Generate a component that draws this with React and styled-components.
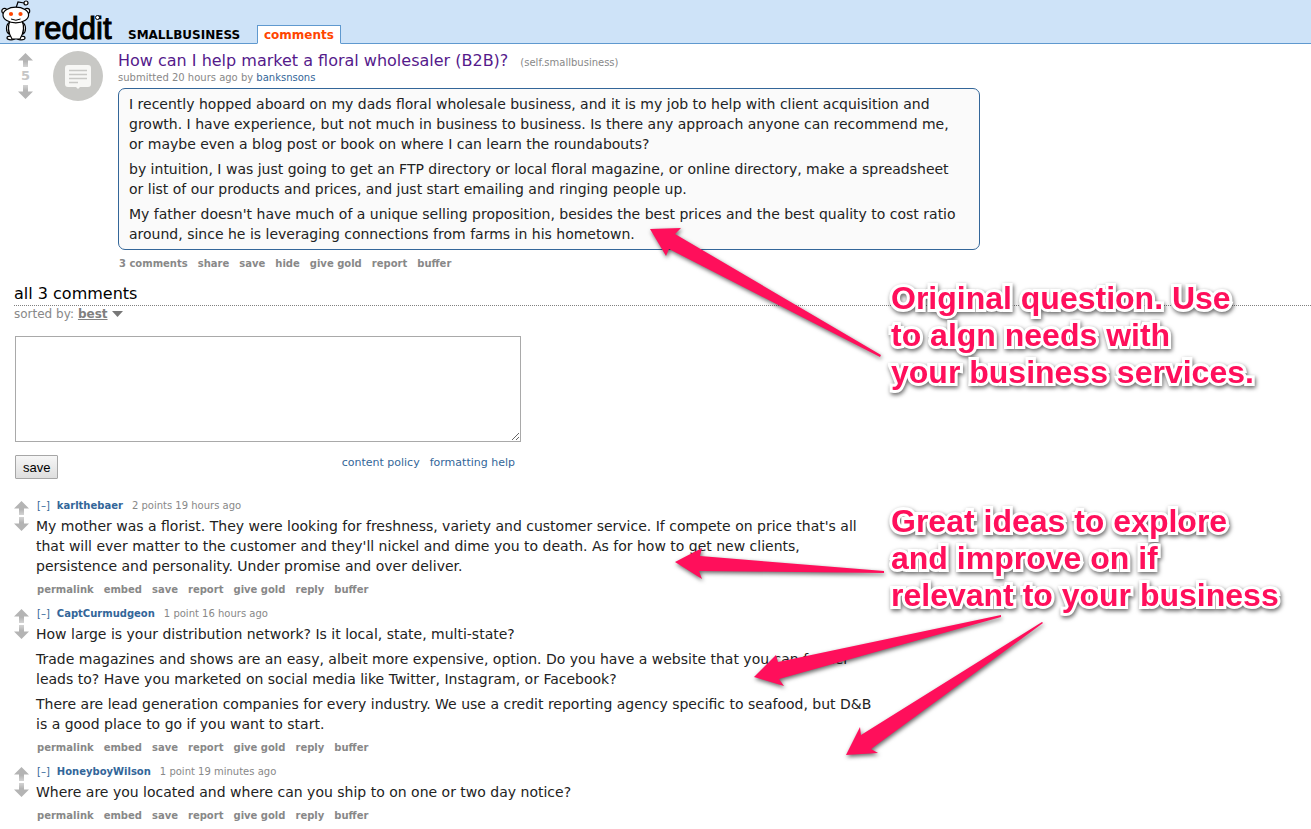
import styled, { createGlobalStyle } from 'styled-components';

const comments = [
    {
        author: 'karlthebaer',
        points: '2 points',
        time: '19 hours ago',
        body: [
            "My mother was a florist. They were looking for freshness, variety and customer service. If compete on price that's all that will ever matter to the customer and they'll nickel and dime you to death. As for how to get new clients, persistence and personality. Under promise and over deliver.",
        ],
    },
    {
        author: 'CaptCurmudgeon',
        points: '1 point',
        time: '16 hours ago',
        body: [
            'How large is your distribution network? Is it local, state, multi-state?',
            'Trade magazines and shows are an easy, albeit more expensive, option. Do you have a website that you can funnel leads to? Have you marketed on social media like Twitter, Instagram, or Facebook?',
            'There are lead generation companies for every industry. We use a credit reporting agency specific to seafood, but D&B is a good place to go if you want to start.',
        ],
    },
    {
        author: 'HoneyboyWilson',
        points: '1 point',
        time: '19 minutes ago',
        body: ['Where are you located and where can you ship to on one or two day notice?'],
    },
];

const postActions = ['3 comments', 'share', 'save', 'hide', 'give gold', 'report', 'buffer'];
const commentActions = ['permalink', 'embed', 'save', 'report', 'give gold', 'reply', 'buffer'];

function Snoo() {
    return (
        <svg width="32" height="43" viewBox="0 0 32 43" aria-hidden="true">
            <g fill="#fff" stroke="#000" strokeWidth="1.2">
                <path d="M16 8 L18 2 L24 3" fill="none" />
                <circle cx="26" cy="3" r="2" />
                <circle cx="4.5" cy="11" r="2.7" />
                <circle cx="27" cy="11" r="2.7" />
                <ellipse cx="11" cy="38" rx="4" ry="1.8" />
                <ellipse cx="21" cy="38" rx="4" ry="1.8" />
                <path d="M10 22 C5 25 6 32 9 34 Z M22 22 C27 25 26 32 23 34 Z" />
                <path d="M10 21 C7 27 9 34 12 39 H20 C23 34 25 27 22 21 Z" />
                <ellipse cx="15.8" cy="15" rx="12.8" ry="7.8" />
            </g>
            <circle cx="11" cy="14" r="2.1" fill="#ff4500" />
            <circle cx="20.5" cy="14" r="2.1" fill="#ff4500" />
            <path d="M11 19 Q16 21.500 20.500 19" fill="none" stroke="#000" />
        </svg>
    );
}

function VoteArrow({ down, label }) {
    return (
        <VoteButton type="button" aria-label={label}>
            <svg width="15" height="14" viewBox="0 0 15 14">
                <defs>
                    <linearGradient id="arrowFade" x1="0" y1="0" x2="0" y2="1">
                        <stop offset="0.6" stopColor="#b4b4b4" />
                        <stop offset="1" stopColor="#d4d4d4" />
                    </linearGradient>
                </defs>
                <path
                    d="M7.500 0 L15 7.500 H10 V14 H5 V7.500 H0 Z"
                    fill="url(#arrowFade)"
                    transform={down ? 'rotate(180 7.500 7)' : undefined}
                />
            </svg>
        </VoteButton>
    );
}

function Actions({ items }) {
    return (
        <ActionList>
            {items.map((item) => (
                <li key={item}>
                    <ActionLink href="#">{item}</ActionLink>
                </li>
            ))}
        </ActionList>
    );
}

function Comment({ author, points, time, body }) {
    return (
        <CommentRow>
            <CommentVotes>
                <VoteArrow label="upvote" />
                <VoteArrow down label="downvote" />
            </CommentVotes>
            <div>
                <CommentTagline>
                    <Link href="#">[–]</Link>
                    <Author href="#">{author}</Author>
                    <span>{points} {time}</span>
                </CommentTagline>
                <Markdown>
                    {body.map((text) => <p key={text}>{text}</p>)}
                </Markdown>
                <Actions items={commentActions} />
            </div>
        </CommentRow>
    );
}

export default function App() {
    return (
        <Page>
            <GlobalStyle />
            <Header>
                <Logo href="#">
                    <Snoo />
                    <Wordmark>reddit</Wordmark>
                </Logo>
                <PageName href="#">SMALLBUSINESS</PageName>
                <Tab href="#">comments</Tab>
            </Header>

            <Post>
                <PostVotes>
                    <VoteArrow label="upvote" />
                    <Score>5</Score>
                    <VoteArrow down label="downvote" />
                </PostVotes>
                <Thumbnail href="#" aria-label="self post">
                    <svg width="50" height="50" viewBox="0 0 50 50">
                        <circle cx="25" cy="25" r="25" fill="#c8c8c5" />
                        <path d="M15 14 H35 Q38 14 38 17 V33 Q38 36 35 36 H27 L25 38 L23 36 H15 Q12 36 12 33 V17 Q12 14 15 14 Z" fill="#f7f7f5" />
                        <path d="M16 19.500 H34 M16 23.500 H34 M16 27.500 H34 M16 31.500 H25" stroke="#c8c8c5" strokeWidth="1.5" />
                    </svg>
                </Thumbnail>
                <Entry>
                    <TitleLine>
                        <Title href="#">How can I help market a floral wholesaler (B2B)?</Title>
                        <Domain>(<a href="#">self.smallbusiness</a>)</Domain>
                    </TitleLine>
                    <Tagline>submitted 20 hours ago by <Link href="#">banksnsons</Link></Tagline>
                    <PostBody>
                        <p>I recently hopped aboard on my dads floral wholesale business, and it is my job to help with client acquisition and growth. I have experience, but not much in business to business. Is there any approach anyone can recommend me, or maybe even a blog post or book on where I can learn the roundabouts?</p>
                        <p>by intuition, I was just going to get an FTP directory or local floral magazine, or online directory, make a spreadsheet or list of our products and prices, and just start emailing and ringing people up.</p>
                        <p>My father doesn't have much of a unique selling proposition, besides the best prices and the best quality to cost ratio around, since he is leveraging connections from farms in his hometown.</p>
                    </PostBody>
                    <Actions items={postActions} />
                </Entry>
            </Post>

            <CommentArea>
                <PanelTitle>all 3 comments</PanelTitle>
                <SortRow>
                    sorted by:
                    <SortButton type="button">
                        <u>best</u>
                        <svg width="11" height="6" viewBox="0 0 11 6"><path d="M0 0 H11 L5.500 6 Z" fill="#777" /></svg>
                    </SortButton>
                </SortRow>
                <Form>
                    <TextBox aria-label="comment" />
                    <FormFooter>
                        <SaveButton type="button">save</SaveButton>
                        <HelpLinks>
                            <Link href="#">content policy</Link>
                            <Link href="#">formatting help</Link>
                        </HelpLinks>
                    </FormFooter>
                </Form>
                <Listing>
                    {comments.map((comment) => <Comment key={comment.author} {...comment} />)}
                </Listing>
            </CommentArea>

            <Arrows width="1311" height="829" viewBox="0 0 1311 829" aria-hidden="true">
                <path d="M650 229 L681 228 L675 234 L881 355 L880 357 L669 249 L666 256 Z" />
                <path d="M675 562 L702 548 L700 556 L884 571 V573 L699 571 L702 579 Z" />
                <path d="M754 677 L776 655 L778 662 L1001 615 V617 L779 679 L784 686 Z" />
                <path d="M846 755 L860 727 L861 735 L1042 622 L1043 623 L871 749 L878 753 Z" />
            </Arrows>
            <Note $top={280}>
                Original question. Use<br />to algn needs with<br />your business services.
            </Note>
            <Note $top={503}>
                Great ideas to explore<br />and improve on if<br />relevant to your business
            </Note>
        </Page>
    );
}

const GlobalStyle = createGlobalStyle`
    body {
        margin: 0;
        background-color: #fff;
        font-family: Verdana, "DejaVu Sans", sans-serif;
        font-size: 10px;
        color: #888;
    }
    a {
        color: inherit;
        text-decoration: none;
    }
    svg {
        display: block;
    }
`;

const Page = styled.div`
    position: relative;
    overflow: hidden;
`;

const Header = styled.header`
    display: flex;
    align-items: flex-end;
    height: 43px;
    background-color: #cee3f8;
    border-bottom: 1px solid #5f99cf;
`;

const Logo = styled.a`
    display: flex;
    align-items: flex-end;
    gap: 2px;
    width: 128px;
    height: 43px;
`;

const Wordmark = styled.span`
    position: relative;
    font-family: "Liberation Sans", Arial, sans-serif;
    font-size: 31px;
    line-height: 28px;
    color: #000;
    -webkit-text-stroke: 1px #000;
    /* white dot over the i */
    &::after {
        content: '';
        position: absolute;
        top: 0;
        left: 61px;
        width: 3px;
        height: 3px;
        border: 1px solid #000;
        border-radius: 50%;
        background-color: #fff;
    }
`;

const PageName = styled.a`
    width: 129px;
    font-size: 12px;
    line-height: 15px;
    font-weight: bold;
    color: #000;
`;

const Tab = styled.a`
    margin-bottom: -1px;
    padding: 1px 6px 0;
    font-size: 12px;
    line-height: 16px;
    font-weight: bold;
    color: #ff4500;
    background-color: #fff;
    border: 1px solid #5f99cf;
    border-bottom-color: #fff;
`;

const Post = styled.section`
    display: flex;
    padding: 7px 0 0 18px;
`;

const VoteButton = styled.button`
    display: block;
    padding: 0;
    border: 0;
    background: none;
    cursor: pointer;
`;

const PostVotes = styled.div`
    width: 15px;
    padding-top: 2px;
    flex-shrink: 0;
`;

const Score = styled.div`
    font-size: 13px;
    line-height: 18px;
    font-weight: bold;
    text-align: center;
    color: #c6c6c6;
`;

const Thumbnail = styled.a`
    margin: 0 15px 0 20px;
    flex-shrink: 0;
`;

const Entry = styled.div`
    min-width: 0;
`;

const TitleLine = styled.div`
    display: flex;
    align-items: baseline;
    gap: 12px;
    line-height: 20px;
`;

const Title = styled.a`
    font-size: 16px;
    color: #551a8b;
`;

const Domain = styled.span`
    font-size: 10px;
`;

const Tagline = styled.div`
    line-height: 10px;
`;

const Link = styled.a`
    color: #369;
`;

const Markdown = styled.div`
    max-width: 840px;
    margin-top: 2px;
    font-size: 14px;
    line-height: 20px;
    color: #222;
    p {
        margin: 0;
    }
    p + p {
        margin-top: 5px;
    }
`;

const PostBody = styled(Markdown)`
    box-sizing: border-box;
    max-width: 862px;
    margin-top: 5px;
    padding: 5px 16px 5px 10px;
    background-color: #fafafa;
    border: 1px solid #369;
    border-radius: 7px;
`;

const ActionList = styled.ul`
    display: flex;
    gap: 10px;
    margin: 6px 0 0;
    padding: 0 1px;
    list-style: none;
    line-height: 16px;
`;

const ActionLink = styled.a`
    font-weight: bold;
`;

const CommentArea = styled.main`
    padding-left: 14px;
    margin-top: 11px;
`;

const PanelTitle = styled.h2`
    margin: 0;
    font-size: 16px;
    line-height: 22px;
    font-weight: normal;
    color: #000;
    border-bottom: 1px dotted #808080;
`;

const SortRow = styled.div`
    display: flex;
    gap: 4px;
    font-size: 12px;
    line-height: 16px;
`;

const SortButton = styled.button`
    display: flex;
    align-items: center;
    gap: 4px;
    padding: 0;
    border: 0;
    background: none;
    font: inherit;
    font-weight: bold;
    color: #808080;
`;

const Form = styled.form`
    max-width: 506px;
    margin: 14px 0 0 1px;
`;

const TextBox = styled.textarea`
    display: block;
    box-sizing: border-box;
    width: 100%;
    height: 106px;
    border: 1px solid #a9a9a9;
    background-color: #fff;
`;

const FormFooter = styled.div`
    display: flex;
    justify-content: space-between;
    margin-top: 13px;
`;

const SaveButton = styled.button`
    height: 24px;
    padding: 0 7px;
    font-family: "Liberation Sans", sans-serif;
    font-size: 13px;
    color: #000;
    background: linear-gradient(#f6f6f6, #dedede);
    border: 1px solid #a6a6a6;
    border-radius: 1px;
`;

const HelpLinks = styled.div`
    display: flex;
    gap: 10px;
    padding-right: 6px;
    font-size: 11px;
    line-height: 16px;
`;

const Listing = styled.div`
    display: flex;
    flex-direction: column;
    gap: 8px;
    margin-top: 19px;
`;

const CommentRow = styled.article`
    display: flex;
    gap: 7px;
`;

const CommentVotes = styled.div`
    display: flex;
    flex-direction: column;
    gap: 2px;
    padding-top: 3px;
`;

const CommentTagline = styled.div`
    display: flex;
    gap: 7px;
    padding-left: 1px;
    line-height: 16px;
`;

const Author = styled(Link)`
    margin-right: 2px;
    font-weight: bold;
`;

/* notes and arrows that float over the thread */
const Arrows = styled.svg`
    position: absolute;
    top: 0;
    left: 0;
    fill: #ff0f5b;
    pointer-events: none;
    filter: drop-shadow(1px 2px 2px rgba(0, 0, 0, 0.6));
`;

const Note = styled.div`
    position: absolute;
    top: ${(props) => props.$top}px;
    left: 891px;
    white-space: nowrap;
    font-family: "Liberation Sans", Arial, sans-serif;
    font-size: 32px;
    line-height: 37px;
    font-weight: bold;
    color: #ff0f5b;
    -webkit-text-stroke: 6px #fff;
    paint-order: stroke fill;
    filter: drop-shadow(1px 2px 2px rgba(0, 0, 0, 0.6));
`;
